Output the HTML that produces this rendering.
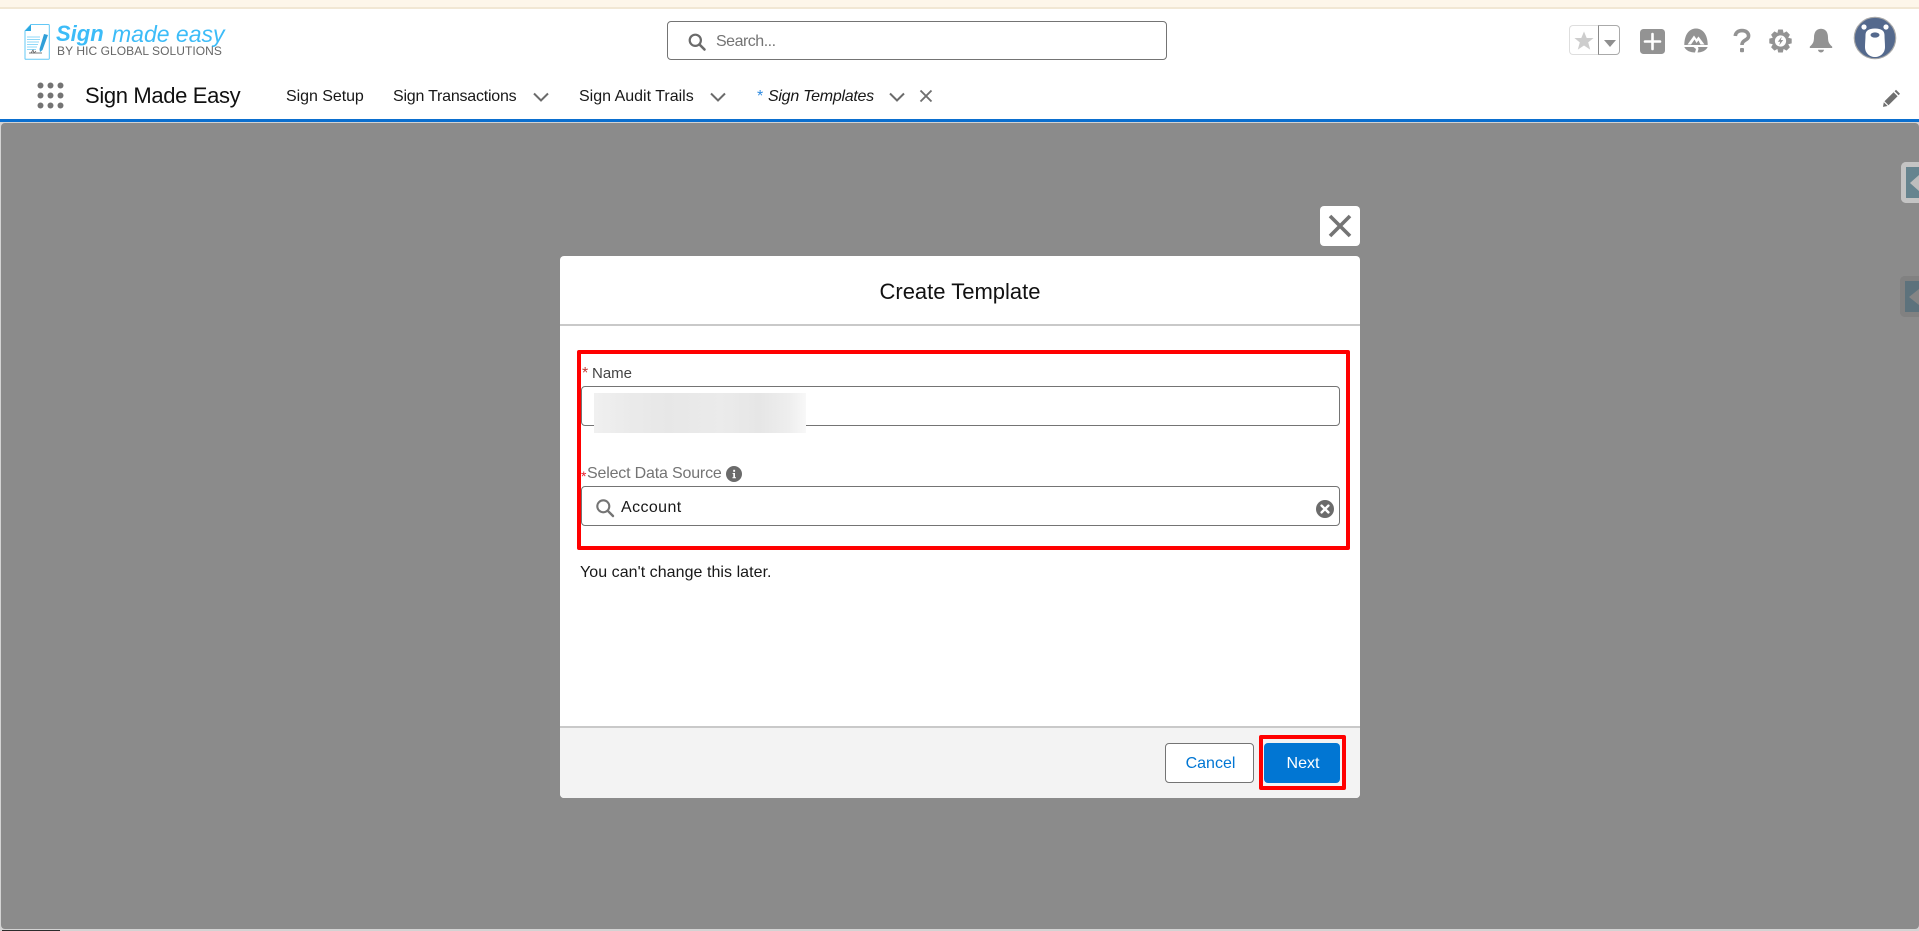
<!DOCTYPE html>
<html lang="en">
<head>
<meta charset="utf-8">
<title>Sign Made Easy</title>
<style>
html,body{margin:0;padding:0;width:1919px;height:931px;overflow:hidden;background:#fff;}
body{font-family:"Liberation Sans",sans-serif;color:#181818;position:relative;}
.a{position:absolute;white-space:nowrap;}
.t{position:absolute;white-space:nowrap;line-height:20px;}
svg{position:absolute;overflow:visible;}
</style>
</head>
<body>
<!-- top banner -->
<div class="a" style="left:0;top:0;width:1919px;height:7px;background:#fdf6ea;"></div>
<div class="a" style="left:0;top:7px;width:1919px;height:2px;background:#f1e7d4;"></div>

<!-- logo -->
<svg style="left:24px;top:24px" width="26" height="36" viewBox="0 0 26 36">
  <path d="M7 .5H24.5a.8.8 0 0 1 .8.8V34.5a.8.8 0 0 1-.8.8H1.8a.8.8 0 0 1-.8-.8V7Z" fill="#fff" stroke="#63c8f6" stroke-width="1"/>
  <path d="M7 .5V7H1Z" fill="#2ba7e0"/>
  <path d="M3 13H16M3 15.5H16M3 18H15M3 20.5H14M3 23H13M3 25.5H12" stroke="#8fd8f8" stroke-width="1"/>
  <path d="M20 10L24 11L18.5 26L16 28L15.5 25Z" fill="#2f9fd8"/>
  <path d="M5 29H18" stroke="#777" stroke-width="1"/>
  <path d="M7 29L9 26L10 29L12 27" stroke="#666" stroke-width=".8" fill="none"/>
</svg>
<div class="t" style="left:56px;top:22px;font-size:22px;line-height:24px;font-weight:bold;font-style:italic;color:#3cbcf8;">Sign</div>
<div class="t" style="left:112px;top:21px;font-size:23px;line-height:26px;font-style:italic;color:#3cbcf8;">made easy</div>
<div class="t" style="left:57px;top:45px;font-size:12px;line-height:12px;color:#666;letter-spacing:.07px;">BY HIC GLOBAL SOLUTIONS</div>

<!-- search -->
<div class="a" style="left:667px;top:21px;width:498px;height:37px;border:1px solid #747474;border-radius:4px;background:#fff;"></div>
<svg style="left:688px;top:33px" width="18" height="18" viewBox="0 0 18 18"><circle cx="7.3" cy="7.3" r="5.6" fill="none" stroke="#6b6b6b" stroke-width="2.2"/><path d="M11.5 11.5L16.5 16.5" stroke="#6b6b6b" stroke-width="2.6" stroke-linecap="round"/></svg>
<div class="t" style="left:716px;top:32px;font-size:16px;color:#747474;letter-spacing:-.5px;">Search...</div>

<!-- right header icons -->
<div class="a" style="left:1569px;top:25px;width:29px;height:28px;border:1px solid #dedede;border-right:0;border-radius:4px 0 0 4px;"></div>
<div class="a" style="left:1598px;top:25px;width:20px;height:28px;border:1px solid #aaa;border-left:1px solid #8a8a8a;border-radius:0 4px 4px 0;"></div>
<svg style="left:1574px;top:31px" width="20" height="20" viewBox="0 0 20 20"><path d="M10 0.5L12.7 7H19.6L14.2 11.4L16.2 18.6L10 14.5L3.8 18.6L5.8 11.4L0.4 7H7.3Z" fill="#cdcdcd"/></svg>
<svg style="left:1604px;top:40px" width="12" height="7" viewBox="0 0 12 7"><path d="M0 0H12L6 7Z" fill="#8f8f8f"/></svg>

<svg style="left:1640px;top:29px" width="25" height="25" viewBox="0 0 25 25"><rect width="25" height="25" rx="3.5" fill="#939393"/><path d="M12.5 5V20M5 12.5H20" stroke="#fff" stroke-width="2.6" stroke-linecap="round"/></svg>

<svg style="left:1684px;top:28px" width="24" height="25" viewBox="0 0 24 25">
  <path d="M12 .5C7 .5 3 4 1.5 9C.7 11.5.3 14 .3 17H23.7C23.7 14 23.3 11.5 22.5 9C21 4 17 .5 12 .5Z" fill="#939393"/>
  <path d="M.3 19H9.5L12 21L11 24.5C6 24.5 2 22.5.3 19ZM23.7 19H14L14.5 21L13.5 24.5C18 24.5 22 22.5 23.7 19Z" fill="#939393"/>
  <path d="M3.5 16.5L10 7.5L12.5 11L14.5 8.5L20.5 16.5L16.5 16.5L14.5 12.5L12.5 15L10.5 11.5L7 16.5Z" fill="#fff"/>
</svg>

<svg style="left:1733px;top:29px" width="18" height="24" viewBox="0 0 18 24"><path d="M2.3 7C2.6 3.5 5.2 1.6 9 1.6C12.9 1.6 15.6 3.7 15.6 7C15.6 11.5 9 10.5 9 16" fill="none" stroke="#939393" stroke-width="3.6"/><rect x="7" y="19" width="4" height="4.2" rx="1" fill="#939393"/></svg>

<svg style="left:1769px;top:29px" width="23" height="24" viewBox="0 0 23 24">
  <path d="M9.2 0.5H13.8L14.6 4L17.6 2.4L20.9 5.7L19.2 8.7L22.7 9.6V14.4L19.2 15.3L20.9 18.3L17.6 21.6L14.6 20L13.8 23.5H9.2L8.4 20L5.4 21.6L2.1 18.3L3.8 15.3L.3 14.4V9.6L3.8 8.7L2.1 5.7L5.4 2.4L8.4 4Z" fill="#939393"/>
  <circle cx="11.5" cy="12" r="5.6" fill="#fff"/>
  <path d="M12.8 7.6L8.8 12.8H11.2L10.2 16.4L14.2 11H11.8Z" fill="#939393"/>
</svg>

<svg style="left:1809px;top:28px" width="24" height="25" viewBox="0 0 24 25"><path d="M12 .8C6.8.8 5 5 5 9.5C5 13.5 4 16 .8 18.6V20H23.2V18.6C20 16 19 13.5 19 9.5C19 5 17.2.8 12 .8Z" fill="#939393"/><path d="M9 21.8H15C14.8 23.4 13.6 24.5 12 24.5C10.4 24.5 9.2 23.4 9 21.8Z" fill="#939393"/></svg>

<svg style="left:1853px;top:16px" width="44" height="44" viewBox="0 0 44 44">
  <circle cx="22" cy="22" r="20.7" fill="#54698d" stroke="#a9a9a9" stroke-width="1.2"/>
  <circle cx="11" cy="11" r="2.6" fill="#fff"/><circle cx="33" cy="11" r="2.6" fill="#fff"/>
  <path d="M22 12.5C15.5 12.5 12.5 15 12.5 19C12.5 23 12 27 12 31C12 37 16.5 41 22 41C27.5 41 32 37 32 31C32 27 31.5 23 31.5 19C31.5 15 28.5 12.5 22 12.5Z" fill="#fff"/>
  <ellipse cx="22" cy="19" rx="4.5" ry="2.6" fill="#54698d"/>
</svg>

<!-- nav row -->
<svg style="left:37px;top:82px" width="27" height="27" viewBox="0 0 27 27" fill="#747474">
  <circle cx="3.5" cy="3.5" r="3"/><circle cx="13.5" cy="3.5" r="3"/><circle cx="23.5" cy="3.5" r="3"/>
  <circle cx="3.5" cy="13.5" r="3"/><circle cx="13.5" cy="13.5" r="3"/><circle cx="23.5" cy="13.5" r="3"/>
  <circle cx="3.5" cy="23.5" r="3"/><circle cx="13.5" cy="23.5" r="3"/><circle cx="23.5" cy="23.5" r="3"/>
</svg>
<div class="t" style="left:85px;top:82px;font-size:22px;line-height:28px;color:#111;letter-spacing:-.35px;">Sign Made Easy</div>
<div class="t" style="left:286px;top:87px;font-size:16px;letter-spacing:-.05px;">Sign Setup</div>
<div class="t" style="left:393px;top:87px;font-size:16px;letter-spacing:-.22px;">Sign Transactions</div>
<svg style="left:533px;top:92px" width="16" height="10" viewBox="0 0 16 10"><path d="M1 1.5L8 8.5L15 1.5" fill="none" stroke="#6b6b6b" stroke-width="2"/></svg>
<div class="t" style="left:579px;top:87px;font-size:16px;">Sign Audit Trails</div>
<svg style="left:710px;top:92px" width="16" height="10" viewBox="0 0 16 10"><path d="M1 1.5L8 8.5L15 1.5" fill="none" stroke="#6b6b6b" stroke-width="2"/></svg>
<div class="t" style="left:757px;top:87px;font-size:16px;color:#2d8ae0;">*</div>
<div class="t" style="left:768px;top:87px;font-size:16px;font-style:italic;letter-spacing:-.27px;">Sign Templates</div>
<svg style="left:889px;top:92px" width="16" height="10" viewBox="0 0 16 10"><path d="M1 1.5L8 8.5L15 1.5" fill="none" stroke="#6b6b6b" stroke-width="2"/></svg>
<svg style="left:919px;top:89px" width="14" height="14" viewBox="0 0 14 14"><path d="M1.5 1.5L12.5 12.5M12.5 1.5L1.5 12.5" stroke="#6f6f6f" stroke-width="1.9"/></svg>
<svg style="left:1883px;top:89px" width="18" height="18" viewBox="0 0 18 18"><path d="M13 .8L17 4.8L15.6 6.2L11.6 2.2ZM10.6 3.2L14.6 7.2L5.5 16.3L1.5 12.3ZM.8 13.3L4.6 17L0 17.9Z" fill="#6f6f6f"/></svg>

<!-- blue bar & overlay -->
<div class="a" style="left:0;top:119px;width:1919px;height:3px;background:#0b6fcf;"></div>
<div class="a" style="left:0;top:122px;width:1919px;height:809px;background:#d3d3d3;"></div>
<div class="a" style="left:1px;top:123px;width:1918px;height:806px;background:#8b8b8b;border-radius:4px;"></div>
<div class="a" style="left:2px;top:930px;width:58px;height:1px;background:#2c2c2c;"></div>

<!-- right side widgets -->
<div class="a" style="left:1901px;top:162px;width:18px;height:31px;border:5px solid #c4c4c4;border-right:0;border-radius:5px 0 0 5px;background:#66848f;"></div>
<svg style="left:1910px;top:175px" width="9" height="16" viewBox="0 0 9 16"><path d="M9 0V16L0 8Z" fill="#bdbdbd"/></svg>
<div class="a" style="left:1900px;top:276px;width:19px;height:31px;border:5px solid #818181;border-right:0;border-radius:5px 0 0 5px;background:#5d727c;"></div>
<svg style="left:1909px;top:289px" width="10" height="16" viewBox="0 0 10 16"><path d="M10 0V16L0 8Z" fill="#858585"/></svg>

<!-- close -->
<div class="a" style="left:1320px;top:206px;width:40px;height:40px;background:#fff;border-radius:4px;"></div>
<svg style="left:1329px;top:215px" width="22" height="22" viewBox="0 0 22 22"><path d="M1 1L21 21M21 1L1 21" stroke="#747474" stroke-width="3.6"/></svg>

<!-- modal -->
<div class="a" style="left:560px;top:256px;width:800px;height:542px;background:#fff;border-radius:4px;overflow:hidden;">
  <div class="a" style="left:0;top:68px;width:800px;height:2px;background:#c9c9c9;"></div>
  <div class="a" style="left:0;top:470px;width:800px;height:72px;background:#f3f3f3;border-top:2px solid #c9c9c9;box-sizing:border-box;"></div>
</div>
<div class="t" style="left:560px;top:278px;width:800px;text-align:center;font-size:22px;line-height:28px;color:#111;">Create Template</div>

<!-- name field -->
<div class="t" style="left:582px;top:364px;font-size:16px;color:#c23934;">*</div>
<div class="t" style="left:592px;top:364px;font-size:15px;color:#444;">Name</div>
<div class="a" style="left:581px;top:386px;width:757px;height:38px;border:1px solid #747474;border-radius:4px;background:#fff;"></div>
<div class="a" style="left:594px;top:393px;width:212px;height:40px;background:linear-gradient(90deg,#f0f0f0 0%,#ebebeb 15%,#e7e7e7 35%,#ebebeb 60%,#e6e6e6 78%,#eeeeee 92%,#f8f8f8 100%);"></div>

<!-- data source field -->
<div class="t" style="left:581px;top:466px;font-size:14px;color:#e4222e;">*</div>
<div class="t" style="left:587px;top:464px;font-size:16px;color:#747474;letter-spacing:-.18px;">Select Data Source</div>
<svg style="left:726px;top:466px" width="16" height="16" viewBox="0 0 16 16"><circle cx="8" cy="8" r="8" fill="#6b6b6b"/><path d="M6.6 7H9V11.3H10V12.3H6.4V11.3H7.3V8H6.6Z" fill="#fff"/><rect x="7.2" y="3.8" width="1.9" height="2" fill="#fff"/></svg>
<div class="a" style="left:581px;top:486px;width:757px;height:38px;border:1px solid #747474;border-radius:4px;background:#fff;"></div>
<svg style="left:596px;top:499px" width="18" height="18" viewBox="0 0 18 18"><circle cx="7.3" cy="7.3" r="6" fill="none" stroke="#747474" stroke-width="2.1"/><path d="M11.8 11.8L17 17" stroke="#747474" stroke-width="2.4" stroke-linecap="round"/></svg>
<div class="t" style="left:621px;top:498px;font-size:16px;color:#181818;letter-spacing:.4px;">Account</div>
<svg style="left:1316px;top:500px" width="18" height="18" viewBox="0 0 18 18"><circle cx="9" cy="9" r="9" fill="#6b6b6b"/><path d="M5.6 5.6L12.4 12.4M12.4 5.6L5.6 12.4" stroke="#fff" stroke-width="2.4" stroke-linecap="round"/></svg>

<div class="t" style="left:580px;top:563px;font-size:16px;color:#181818;letter-spacing:.05px;">You can't change this later.</div>

<!-- red highlight 1 -->
<div class="a" style="left:577px;top:350px;width:765px;height:192px;border:4px solid #ff0000;border-radius:2px;"></div>

<!-- footer buttons -->
<div class="a" style="left:1165px;top:743px;width:87px;height:38px;background:#fff;border:1px solid #747474;border-radius:4px;"></div>
<div class="t" style="left:1166px;top:754px;width:89px;text-align:center;font-size:16px;color:#0176d3;">Cancel</div>
<div class="a" style="left:1264px;top:743px;width:76px;height:40px;background:#0176d3;border-radius:4px;"></div>
<div class="t" style="left:1265px;top:754px;width:76px;text-align:center;font-size:16px;color:#fff;">Next</div>
<!-- red highlight 2 -->
<div class="a" style="left:1259px;top:735px;width:79px;height:47px;border:4px solid #ff0000;border-radius:2px;"></div>
</body>
</html>
